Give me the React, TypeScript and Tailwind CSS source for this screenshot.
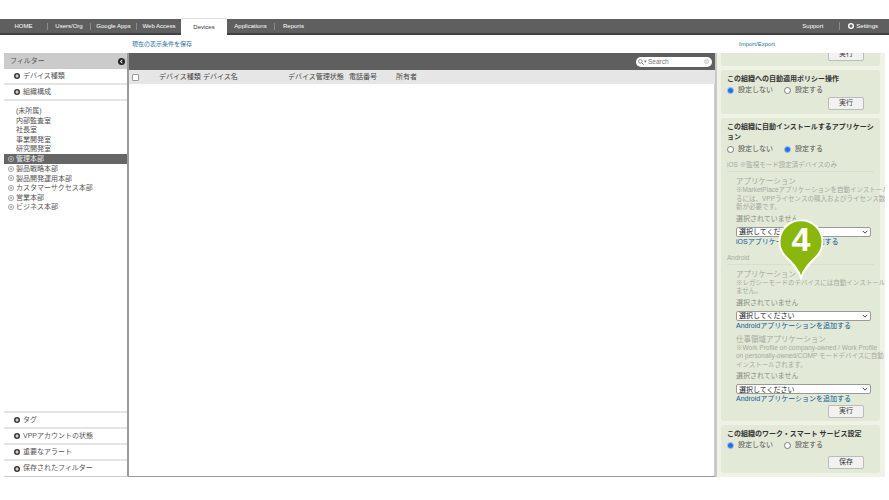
const font = { fontFamily: '"Liberation Sans","Noto Sans CJK JP",sans-serif' };

const tabs: [string, string][] = [
  ["HOME", "w-[47px]"],
  ["Users/Org", "w-[43px]"],
  ["Google Apps", "w-[46px]"],
  ["Web Access", "w-[45px]"],
];

function Plus({ light = false }: { light?: boolean }) {
  return (
    <svg viewBox="0 0 8 8" className="w-[6px] h-[6px] shrink-0">
      <circle cx="4" cy="4" r="4" fill={light ? "#fff" : "#333"} />
      <path d="M4 1.8V6.2M1.8 4H6.2" stroke={light ? "#333" : "#fff"} strokeWidth="1.4" />
    </svg>
  );
}

function Hollow({ light = false }: { light?: boolean }) {
  return (
    <svg viewBox="0 0 8 8" className="w-[6px] h-[6px] shrink-0">
      <circle cx="4" cy="4" r="3.5" fill="none" stroke={light ? "#ddd" : "#777"} strokeWidth="0.8" />
      <path d="M4 2.2V5.8M2.2 4H5.8" stroke={light ? "#ddd" : "#777"} strokeWidth="0.8" />
    </svg>
  );
}

function FilterRow({ label }: { label: string }) {
  return (
    <div className="h-[16px] flex items-center gap-[3px] pl-[10px] text-[7px] text-[#555] border-b-2 border-[#e4e4e4]">
      <Plus />
      <span>{label}</span>
    </div>
  );
}

function Radio({ on, dim, label, gap = "gap-[4px]" }: { on: boolean; dim?: boolean; label: string; gap?: string }) {
  return (
    <span className={`inline-flex items-center ${gap}`}>
      <span
        className={`w-[7px] h-[7px] rounded-full flex items-center justify-center border ${
          on ? "border-[#7fa9ec] bg-white" : "border-[#777] bg-white"
        } ${dim ? "opacity-60" : ""}`}
      >
        {on && <span className="w-[5px] h-[5px] rounded-full bg-[#1f6fe8]" />}
      </span>
      <span className={`text-[7px] ${dim ? "text-[#a5a99f]" : "text-[#555]"}`}>{label}</span>
    </span>
  );
}

function Btn({ label, className = "" }: { label: string; className?: string }) {
  return (
    <div className={`flex justify-end pr-[16px] ${className}`}>
      <div className="w-[36px] h-[13px] flex items-center justify-center text-[7px] text-[#333] bg-[#f2f2f0] border border-[#bbb] rounded-[2px]">
        {label}
      </div>
    </div>
  );
}

function Select() {
  return (
    <div className="h-[10px] mx-[9px] flex items-center justify-between bg-white border border-[#999] rounded-[2px] pl-[2px] pr-[2px] text-[7px] leading-none text-[#222]">
      <span>選択してください</span>
      <svg viewBox="0 0 8 8" className="w-[6px] h-[6px]">
        <path d="M1 2.5L4 5.5L7 2.5" fill="none" stroke="#333" strokeWidth="1.2" />
      </svg>
    </div>
  );
}

function AppBlock({ title, notes, link, topGap }: { title: string; notes: string[]; link: string; topGap: string }) {
  return (
    <div className={topGap}>
      <div className="pl-[9px] text-[7.5px] leading-[9px] text-[#a5a99f]">{title}</div>
      <div className="pl-[9px] pr-[6px]">
        {notes.map((n) => (
          <div key={n} className="text-[6.5px] leading-[8.5px] text-[#a5a99f] whitespace-nowrap">
            {n}
          </div>
        ))}
      </div>
      <div className="pl-[9px] mt-[2px] text-[7px] leading-[10px] text-[#8b8f85]">選択されていません</div>
      <div className="mt-[3px]">
        <Select />
      </div>
      <div className="pl-[9px] text-[7px] leading-[10px] text-[#0b5d99]">{link}</div>
    </div>
  );
}

export default function App() {
  return (
    <div className="relative w-[889px] h-[500px] bg-white overflow-hidden" style={font}>
      <div className="h-[19px]" />
      {/* top bar */}
      <div className="h-[16px] flex items-start bg-[#5f5f5f] border-b-[2px] border-[#3f3f3f] text-[6px] text-white">
        <div className="flex items-center h-[14px]">
          {tabs.map(([t, w], i) => (
            <div key={t} className={`${w} h-[7px] flex items-center justify-center ${i === 0 ? "" : "border-l border-[#8a8a8a]"}`}>
              {t}
            </div>
          ))}
        </div>
        <div className="ml-[0px] w-[46px] h-[17px] -mt-[1px] bg-white text-[#333] border-t border-[#ddd] flex items-center justify-center relative z-10">
          Devices
        </div>
        <div className="flex items-center h-[14px]">
          <div className="w-[47px] text-center">Applications</div>
          <div className="w-[38px] text-center border-l border-[#8a8a8a] h-[7px] leading-[7px]">Reports</div>
        </div>
        <div className="ml-auto flex items-center h-[14px]">
          <div className="w-[37px] text-center">Support</div>
          <div className="h-[8px] border-l border-[#8a8a8a] ml-[8px] mr-[8px]" />
          <div className="flex items-center gap-[2px] mr-[11px]">
            <Plus light />
            <span>Settings</span>
          </div>
        </div>
      </div>

      {/* links */}
      <div className="h-[18px] flex items-center text-[6px] text-[#2a6fb0]">
        <div className="pl-[132px]">現在の表示条件を保存</div>
        <div className="ml-[490px] w-[93px] text-right">Import/Export</div>
      </div>

      {/* main */}
      <div className="h-[424px] flex pl-[4px] pr-[4px]">
        {/* filter */}
        <div className="w-[125px] flex flex-col border-r-2 border-[#9a9a9a] border-b border-b-[#ccc] bg-white">
          <div className="h-[16px] bg-[#cbcbcb] flex items-center justify-between pl-[6px] pr-[2px] text-[7px] text-[#555]">
            <span>フィルター</span>
            <svg viewBox="0 0 8 8" className="w-[7px] h-[7px]">
              <circle cx="4" cy="4" r="4" fill="#222" />
              <path d="M5 2L3 4L5 6" fill="none" stroke="#fff" strokeWidth="1.2" />
            </svg>
          </div>
          <FilterRow label="デバイス種類" />
          <FilterRow label="組織構成" />
          <div className="flex-1 pt-[5px] text-[7px] leading-[9.6px] text-[#555]">
            {["(未所属)", "内部監査室", "社長室", "事業開発室", "研究開発室"].map((t) => (
              <div key={t} className="pl-[12px] h-[9.6px]">{t}</div>
            ))}
            <div className="pl-[4px] h-[10px] bg-[#666] text-[#eee] flex items-center gap-[2px]">
              <Hollow light />
              <span>管理本部</span>
            </div>
            {["製品戦略本部", "製品開発運用本部", "カスタマーサクセス本部", "営業本部", "ビジネス本部"].map((t) => (
              <div key={t} className="pl-[4px] h-[9.6px] flex items-center gap-[2px]">
                <Hollow />
                <span>{t}</span>
              </div>
            ))}
          </div>
          <div className="border-t-2 border-[#e4e4e4]">
            <FilterRow label="タグ" />
            <FilterRow label="VPPアカウントの状態" />
            <FilterRow label="重要なアラート" />
            <div className="h-[15px] flex items-center gap-[3px] pl-[10px] text-[7px] text-[#555]">
              <Plus />
              <span>保存されたフィルター</span>
            </div>
          </div>
        </div>

        {/* table */}
        <div className="w-[586px] flex flex-col border-b border-[#999]">
          <div className="h-[17px] bg-[#5f5f5f] flex items-center justify-end pr-[3px]">
            <div className="w-[76px] h-[10px] rounded-full bg-white flex items-center pl-[2px] pr-[3px] text-[6.5px] text-[#777]">
              <svg viewBox="0 0 10 10" className="w-[6px] h-[6px] shrink-0">
                <circle cx="4" cy="4" r="3" fill="none" stroke="#666" strokeWidth="1.2" />
                <path d="M6.2 6.2L9.5 9.5" stroke="#666" strokeWidth="1.4" />
              </svg>
              <span className="text-[5px] mr-[1px]">▾</span>
              <span>Search</span>
              <span className="ml-auto w-[5px] h-[5px] rounded-full border border-[#ccc] bg-[#e8e8e8]" />
            </div>
          </div>
          <div className="h-[14px] bg-[#e6e6e6] flex items-center text-[7px] text-[#444]">
            <span className="ml-[3px] w-[7px] h-[7px] border border-[#999] bg-white rounded-[1px]" />
            <span className="ml-[20px] w-[44px]">デバイス種類</span>
            <span className="w-[85px]">デバイス名</span>
            <span className="w-[61px]">デバイス管理状態</span>
            <span className="w-[47px]">電話番号</span>
            <span>所有者</span>
          </div>
          <div className="flex-1 bg-white border-r border-[#ccc]" />
        </div>

        {/* right panel */}
        <div className="w-[170px] flex flex-col justify-end overflow-hidden bg-[#eef3e6] border-l-2 border-[#c9c9c9] pl-[4px] pr-[5px] pb-[4px] gap-[4px]">
          <div className="shrink-0 rounded-[3px] bg-[#e2e9d6] pb-[5px] pl-[6px]">
            <div className="text-[7px] leading-[10px] font-bold text-[#333]">この組織への自動適用ポリシー操作</div>
            <div className="flex gap-[8px]">
              <Radio on dim label="設定しない" />
              <Radio on={false} dim label="設定する" />
            </div>
            <Btn label="実行" className="mt-[1px]" />
          </div>
          <div className="shrink-0 rounded-[3px] bg-[#e2e9d6] pt-[4px] pb-[4px] pl-[6px]">
            <div className="text-[7px] leading-[10px] font-bold text-[#333]">この組織への自動適用ポリシー操作</div>
            <div className="flex gap-[11px] h-[12px] items-center">
              <Radio on label="設定しない" />
              <Radio on={false} label="設定する" />
            </div>
            <Btn label="実行" className="mt-[1px]" />
          </div>
          <div className="shrink-0 rounded-[3px] bg-[#e2e9d6] pt-[4px] pb-[3px] pl-[6px]">
            <div className="text-[7px] leading-[10px] font-bold text-[#333]">この組織に自動インストールするアプリケーション</div>
            <div className="flex gap-[11px] h-[14px] items-center">
              <Radio on={false} label="設定しない" />
              <Radio on label="設定する" />
            </div>
            <div className="mt-[4px] text-[6.5px] leading-[9px] text-[#a5a99f] border-b border-[#d8dfcc] pb-[2px] mr-[6px]">
              iOS ※監視モード設定済デバイスのみ
            </div>
            <AppBlock
              topGap="mt-[5px]"
              title="アプリケーション"
              notes={[
                "※MarketPlaceアプリケーションを自動インストールす",
                "るには、VPPライセンスの購入およびライセンス数の更",
                "新が必要です。",
              ]}
              link="iOSアプリケーションを追加する"
            />
            <div className="mt-[6px] text-[6.5px] leading-[9px] text-[#a5a99f] border-b border-[#d8dfcc] pb-[2px] mr-[6px]">
              Android
            </div>
            <AppBlock
              topGap="mt-[5px]"
              title="アプリケーション"
              notes={["※レガシーモードのデバイスには自動インストールされ", "ません。"]}
              link="Androidアプリケーションを追加する"
            />
            <AppBlock
              topGap="mt-[4px]"
              title="仕事領域アプリケーション"
              notes={[
                "※Work Profile on company-owned / Work Profile",
                "on personally-owned/COMP モードデバイスに自動",
                "インストールされます。",
              ]}
              link="Androidアプリケーションを追加する"
            />
            <Btn label="実行" className="mt-[1px]" />
          </div>
          <div className="shrink-0 rounded-[3px] bg-[#e2e9d6] pt-[4px] pb-[4px] pl-[6px]">
            <div className="text-[7px] leading-[10px] font-bold text-[#333]">この組織のワーク・スマート サービス設定</div>
            <div className="flex gap-[11px] h-[13px] items-center">
              <Radio on label="設定しない" />
              <Radio on={false} label="設定する" />
            </div>
            <Btn label="保存" className="mt-[4px]" />
          </div>
        </div>
      </div>

      {/* callout badge */}
      <svg viewBox="0 0 48 64" className="absolute left-[777px] top-[216px] w-[48px] h-[64px]">
        <path
          d="M24 62 C21 52 14 46 8 40 A21.5 21.5 0 1 1 40 40 C34 46 27 52 24 62Z"
          fill="#8ab80a"
          stroke="#fff"
          strokeWidth="2"
        />
      </svg>
      <div className="absolute left-[777px] top-[219px] w-[48px] text-center text-[34px] leading-[40px] font-bold text-white">
        4
      </div>
    </div>
  );
}
